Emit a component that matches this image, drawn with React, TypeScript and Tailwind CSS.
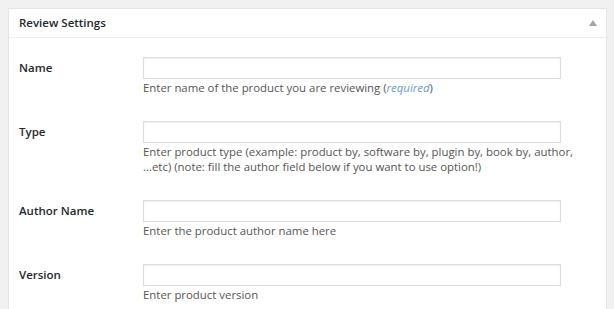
import React from "react";

const font = { fontFamily: '"Open Sans", "Noto Sans", sans-serif' };

function Row({ label, children }: { label: string; children: React.ReactNode }) {
  return (
    <div className="flex">
      <div className="w-[124px] shrink-0 h-[22px] flex items-center text-[11.5px] font-semibold text-[#23282d]">
        {label}
      </div>
      <div className="w-[418px]">
        <div className="h-[22px] border border-[#dddddd] bg-white shadow-[inset_0_1px_2px_rgba(0,0,0,0.07)]" />
        <div className="text-[11.4px] leading-[15px] text-[#555555] mt-[1px] -mr-[20px]">{children}</div>
      </div>
    </div>
  );
}

export default function App() {
  return (
    <div className="w-[614px] h-[309px] overflow-hidden bg-[#f1f1f1] pt-[8px] pl-[8px] pr-[7px]" style={font}>
      <div className="bg-white border border-[#e5e5e5] h-[320px]">
        <div className="h-[29px] border-b border-[#eeeeee] flex items-center justify-between pl-[10px] pr-[9px]">
          <span className="text-[11.5px] font-semibold text-[#23282d]">Review Settings</span>
          <svg width="8" height="6" viewBox="0 0 8 6">
            <path d="M4 0 L8 6 L0 6 Z" fill="#a0a5aa" />
          </svg>
        </div>
        <div className="pl-[10px] pt-[19px] flex flex-col gap-[26px]">
          <Row label="Name">
            Enter name of the product you are reviewing (<em className="text-[#6a9bd1]">required</em>)
          </Row>
          <Row label="Type">
            Enter product type (example: product by, software by, plugin by, book by, author,
            <br />
            ...etc) (note: fill the author field below if you want to use option!)
          </Row>
          <Row label="Author Name">Enter the product author name here</Row>
          <Row label="Version">Enter product version</Row>
        </div>
      </div>
    </div>
  );
}
